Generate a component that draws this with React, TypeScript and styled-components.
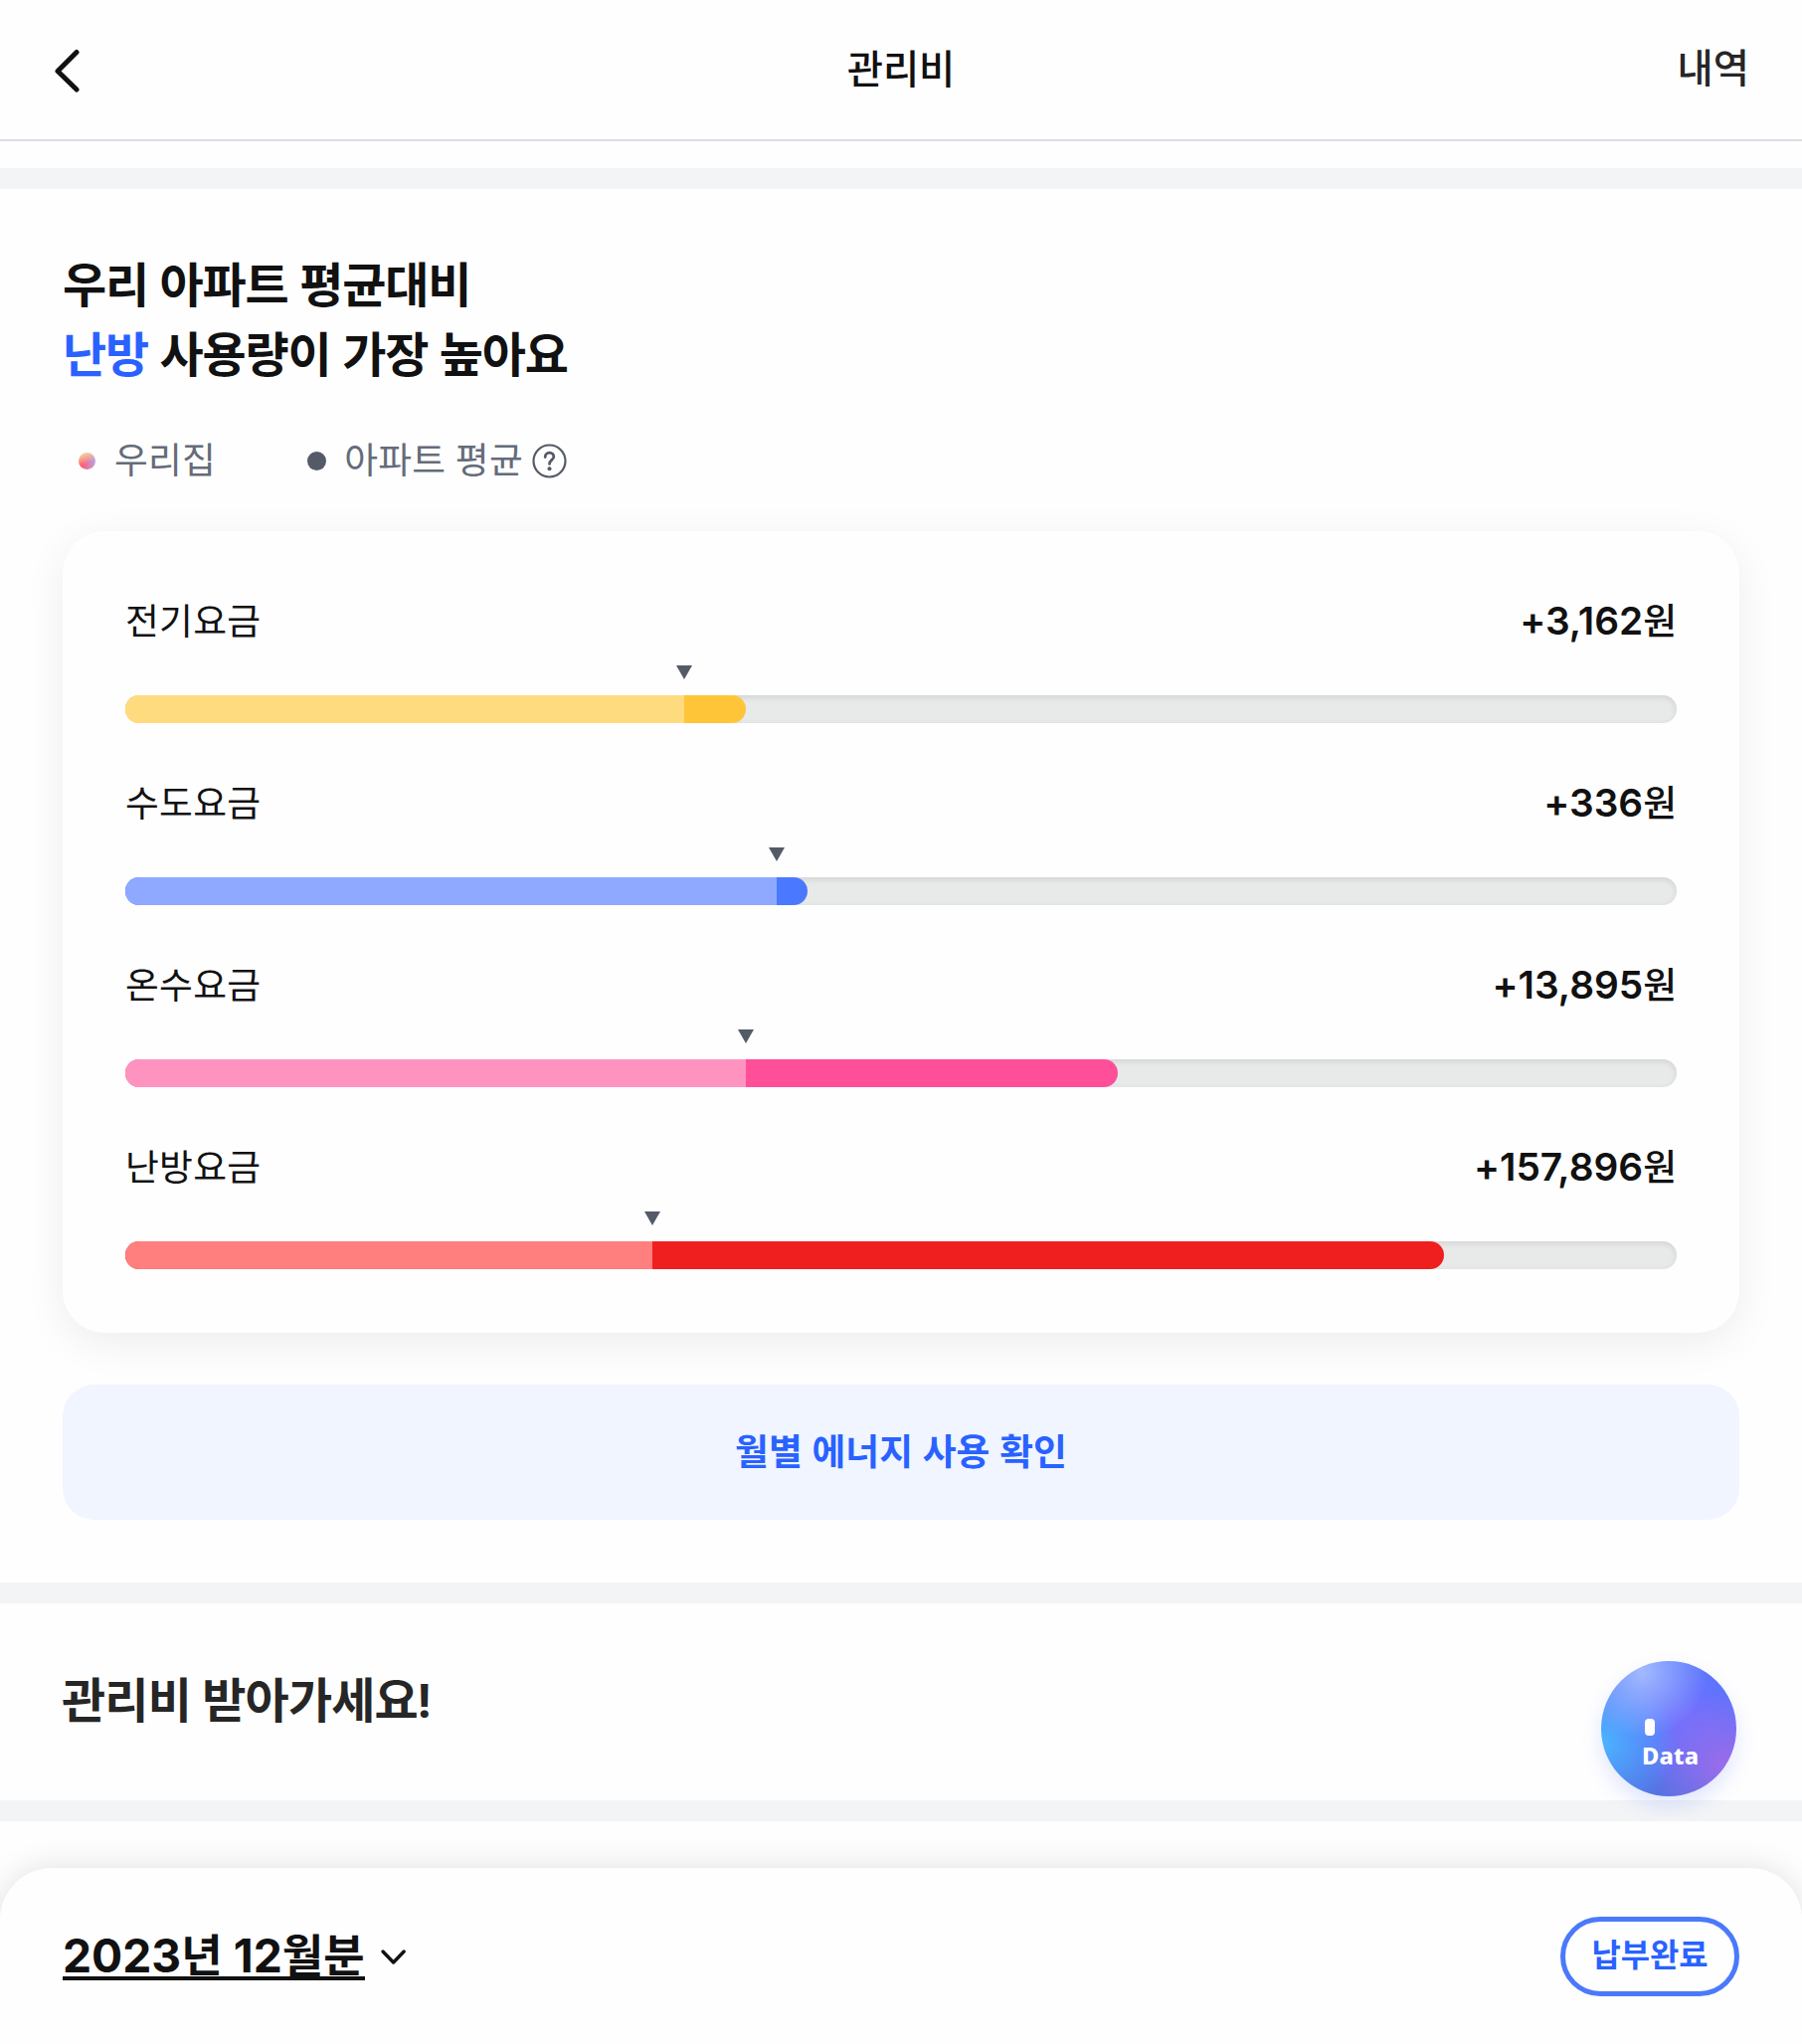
import React from "react";
import styled, { createGlobalStyle } from "styled-components";

const GlobalStyle = createGlobalStyle`
  * { box-sizing: border-box; }
  body {
    margin: 0;
    background: #fefefe;
    color: #111;
    font-family: "Noto Sans CJK KR", sans-serif;
    overflow: hidden;
  }
  button { border: 0; padding: 0; background: none; font: inherit; color: inherit; }
  h1, h2, p { margin: 0; font: inherit; }
`;

const Page = styled.div`
  width: 1812px;
  height: 2055px;
  overflow: hidden;
  display: flex;
  flex-direction: column;
`;

const Header = styled.header`
  display: grid;
  grid-template-columns: 1fr auto 1fr;
  align-items: center;
  height: 142px;
  flex: none;
  padding: 0 53px 8px 54px;
  border-bottom: 2px solid #dcdde4;
`;

const BackIcon = styled.svg`
  display: block;
  width: 27px;
  height: 44px;
  margin-top: 10px;
`;

const HeaderTitle = styled.h1`
  padding: 1px 1px 0 0;
  font-size: 39.4px;
  font-weight: 500;
  line-height: 56px;
`;

const HeaderLink = styled.button`
  justify-self: end;
  font-size: 39.4px;
  font-weight: 500;
  line-height: 56px;
  color: #262626;
`;

const Band = styled.div<{ $top?: number }>`
  flex: none;
  height: 21px;
  margin-top: ${(p) => p.$top ?? 0}px;
  background: #f3f4f6;
`;

const Usage = styled.section`
  flex: none;
  height: 1401px;
  padding: 58px 63px 0;
`;

const Title = styled.h2`
  font-size: 48px;
  font-weight: 700;
  line-height: 70px;
  letter-spacing: -1.15px;
  word-spacing: 1.8px;
`;

const Accent = styled.span`
  color: #2962ff;
`;

const Legend = styled.div`
  display: flex;
  align-items: center;
  height: 54px;
  margin-top: 48px;
  padding-left: 16px;
  font-size: 36.75px;
  color: #656b7a;
`;

const LegendItem = styled.div<{ $gap: number }>`
  display: flex;
  align-items: center;
  gap: ${(p) => p.$gap}px;
  margin-right: 92px;
`;

const LegendText = styled.span`
  padding-bottom: 6px;
  letter-spacing: 0.25px;
  word-spacing: 1px;
`;

const Dot = styled.i<{ $size: number; $fill: string }>`
  width: ${(p) => p.$size}px;
  height: ${(p) => p.$size}px;
  border-radius: 50%;
  background: ${(p) => p.$fill};
`;

const HelpIcon = styled.svg`
  width: 35px;
  height: 35px;
  margin-left: -9px;
`;

const Card = styled.div`
  height: 806px;
  margin-top: 44px;
  padding: 61px 63px 0;
  border-radius: 42px;
  background: #fefefe;
  box-shadow: 0 10px 42px rgba(0, 0, 0, 0.07);
`;

const Row = styled.div`
  height: 183px;
`;

const RowHead = styled.div`
  display: flex;
  justify-content: space-between;
  height: 54px;
  line-height: 54px;
  font-size: 36.75px;
`;

const FeeName = styled.span`
  letter-spacing: 0.3px;
`;

const Amount = styled.span`
  font-weight: 500;
`;

const Digits = styled.span`
  font-family: Inter, sans-serif;
  font-size: 38.8px;
  font-weight: 600;
`;

const MarkerLane = styled.div`
  display: flex;
  height: 50px;
  padding-top: 20px;
`;

const Marker = styled.svg`
  width: 16px;
  height: 14px;
  margin-left: -8px;
`;

const Track = styled.div`
  height: 28px;
  border-radius: 14px;
  background: #e8eae9;
  box-shadow: inset 0 2px 6px rgba(0, 0, 0, 0.1);
  overflow: hidden;
`;

const Fill = styled.div<{ $bg: string }>`
  height: 100%;
  border-radius: 0 14px 14px 0;
  overflow: hidden;
  background: ${(p) => p.$bg};
`;

const FillBase = styled.div<{ $bg: string }>`
  height: 100%;
  background: ${(p) => p.$bg};
`;

const EnergyButton = styled.button`
  display: block;
  width: 100%;
  height: 136px;
  margin-top: 52px;
  padding-bottom: 6px;
  border-radius: 32px;
  background: #f0f5ff;
  color: #2962ff;
  font-size: 36.75px;
  font-weight: 700;
  word-spacing: 1.5px;
`;

const Reward = styled.section`
  display: flex;
  justify-content: space-between;
  flex: none;
  height: 198px;
  padding: 58px 66px 0 62px;
`;

const RewardTitle = styled.h2`
  height: 80px;
  line-height: 73px;
  font-size: 48px;
  font-weight: 700;
  letter-spacing: -0.8px;
  word-spacing: 1px;
  color: #262626;
`;

const Exclamation = styled.span`
  margin-left: -1px;
  font-family: Inter, sans-serif;
  font-size: 46px;
`;

const DataBadge = styled.button`
  position: relative;
  width: 136px;
  height: 136px;
  border-radius: 50%;
  background:
    radial-gradient(circle at 30% 8%, rgba(167, 190, 255, 0.95), rgba(130, 150, 255, 0) 42%),
    radial-gradient(circle at 0% 60%, #4bb4ff 0%, rgba(75, 160, 255, 0) 48%),
    radial-gradient(circle at 92% 78%, #9c6cea 0%, rgba(145, 108, 240, 0) 46%),
    radial-gradient(circle at 62% 42%, #7070ff 0%, rgba(105, 112, 255, 0) 60%),
    linear-gradient(180deg, #5577ff 0%, #5a72f8 55%, #5472e0 100%);
  box-shadow: 0 10px 20px rgba(80, 110, 255, 0.17);
`;

const BadgeMark = styled.i`
  position: absolute;
  left: 44px;
  top: 58px;
  width: 10px;
  height: 17px;
  border-radius: 4px;
  background: #fff;
`;

const BadgeLabel = styled.span`
  position: absolute;
  left: 41px;
  top: 80px;
  font-family: "Noto Sans", sans-serif;
  font-weight: 800;
  font-size: 23.6px;
  letter-spacing: 0.2px;
  line-height: 31px;
  color: #fff;
`;

const Sheet = styled.section`
  display: flex;
  align-items: flex-start;
  justify-content: space-between;
  flex: 1;
  margin-top: 47px;
  padding: 49px 63px 0;
  border-radius: 52px 52px 0 0;
  background: #fefefe;
  box-shadow: 0 0 32px rgba(0, 0, 0, 0.12);
`;

const MonthPicker = styled.button`
  display: flex;
  align-items: center;
  gap: 15px;
  margin-top: 6px;
`;

const Month = styled.span`
  height: 58px;
  line-height: 61px;
  border-bottom: 4px solid #111;
  font-size: 45px;
  font-weight: 700;
  white-space: nowrap;
  word-spacing: 1px;
`;

const MonthDigits = styled.span`
  font-family: Inter, sans-serif;
  font-weight: 700;
  font-size: 46.2px;
`;

const ChevronIcon = styled.svg`
  width: 28px;
  height: 18px;
  margin-top: 12px;
`;

const PaidPill = styled.div`
  width: 180px;
  height: 80px;
  border: 5px solid #4b79fb;
  border-radius: 40px;
  color: #2962ff;
  font-size: 31.8px;
  font-weight: 700;
  line-height: 62px;
  text-align: center;
`;

type Fee = { name: string; diff: string; average: number; ours: number; base: string; over: string };

const fees: Fee[] = [
  { name: "전기요금", diff: "+3,162", average: 36, ours: 40, base: "#ffdb80", over: "#ffc539" },
  { name: "수도요금", diff: "+336", average: 42, ours: 44, base: "#8ea9ff", over: "#4a78ff" },
  { name: "온수요금", diff: "+13,895", average: 40, ours: 64, base: "#ff93c0", over: "#ff4f98" },
  { name: "난방요금", diff: "+157,896", average: 34, ours: 85, base: "#ff7e7e", over: "#f01f1f" },
];

function FeeRow({ fee }: { fee: Fee }) {
  return (
    <Row>
      <RowHead>
        <FeeName>{fee.name}</FeeName>
        <Amount>
          <Digits>{fee.diff}</Digits>원
        </Amount>
      </RowHead>
      <MarkerLane style={{ paddingLeft: `${fee.average}%` }}>
        <Marker viewBox="0 0 16 14">
          <path d="M0 0H16L8 14Z" fill="#555a68" />
        </Marker>
      </MarkerLane>
      <Track>
        <Fill $bg={fee.over} style={{ width: `${fee.ours}%` }}>
          <FillBase $bg={fee.base} style={{ width: `${(fee.average / fee.ours) * 100}%` }} />
        </Fill>
      </Track>
    </Row>
  );
}

export default function App() {
  return (
    <>
      <GlobalStyle />
      <Page>
        <Header>
          <BackIcon viewBox="0 0 27 44" fill="none" stroke="#111" strokeWidth="5" strokeLinecap="round" strokeLinejoin="round">
            <path d="M23 3.5L4 22.5L23 41" />
          </BackIcon>
          <HeaderTitle>관리비</HeaderTitle>
          <HeaderLink>내역</HeaderLink>
        </Header>
        <Band $top={27} />
        <Usage>
          <Title>
            우리 아파트 평균대비
            <br />
            <Accent>난방</Accent> 사용량이 가장 높아요
          </Title>
          <Legend>
            <LegendItem $gap={19}>
              <Dot $size={17} $fill="linear-gradient(160deg, #f3cf9a 15%, rgba(243,207,154,0) 60%), linear-gradient(90deg, #ff5f78 25%, #b9a0e0 95%)" />
              <LegendText>우리집</LegendText>
            </LegendItem>
            <LegendItem $gap={18}>
              <Dot $size={19} $fill="#555a68" />
              <LegendText>아파트 평균</LegendText>
              <HelpIcon viewBox="0 0 35 35" fill="none" stroke="#555a68" strokeLinecap="round" strokeLinejoin="round">
                <circle cx="17.5" cy="17.5" r="16" strokeWidth="2.2" />
                <path d="M13.2 13.5C13.2 10.9 15 9.2 17.5 9.2S21.8 10.9 21.8 13.2C21.8 16.2 17.5 16.6 17.5 20.4" strokeWidth="2.8" />
                <circle cx="17.5" cy="25.2" r="2" fill="#555a68" stroke="none" />
              </HelpIcon>
            </LegendItem>
          </Legend>
          <Card>
            {fees.map((fee) => (
              <FeeRow key={fee.name} fee={fee} />
            ))}
          </Card>
          <EnergyButton>월별 에너지 사용 확인</EnergyButton>
        </Usage>
        <Band />
        <Reward>
          <RewardTitle>
            관리비 받아가세요<Exclamation>!</Exclamation>
          </RewardTitle>
          <DataBadge>
            <BadgeMark />
            <BadgeLabel>Data</BadgeLabel>
          </DataBadge>
        </Reward>
        <Band />
        <Sheet>
          <MonthPicker>
            <Month>
              <MonthDigits>2023</MonthDigits>년 <MonthDigits>12</MonthDigits>월분
            </Month>
            <ChevronIcon viewBox="0 0 28 18" fill="none" stroke="#111" strokeWidth="3.4" strokeLinecap="round" strokeLinejoin="round">
              <path d="M3 3L13.6 14L24.2 3" />
            </ChevronIcon>
          </MonthPicker>
          <PaidPill>납부완료</PaidPill>
        </Sheet>
      </Page>
    </>
  );
}
